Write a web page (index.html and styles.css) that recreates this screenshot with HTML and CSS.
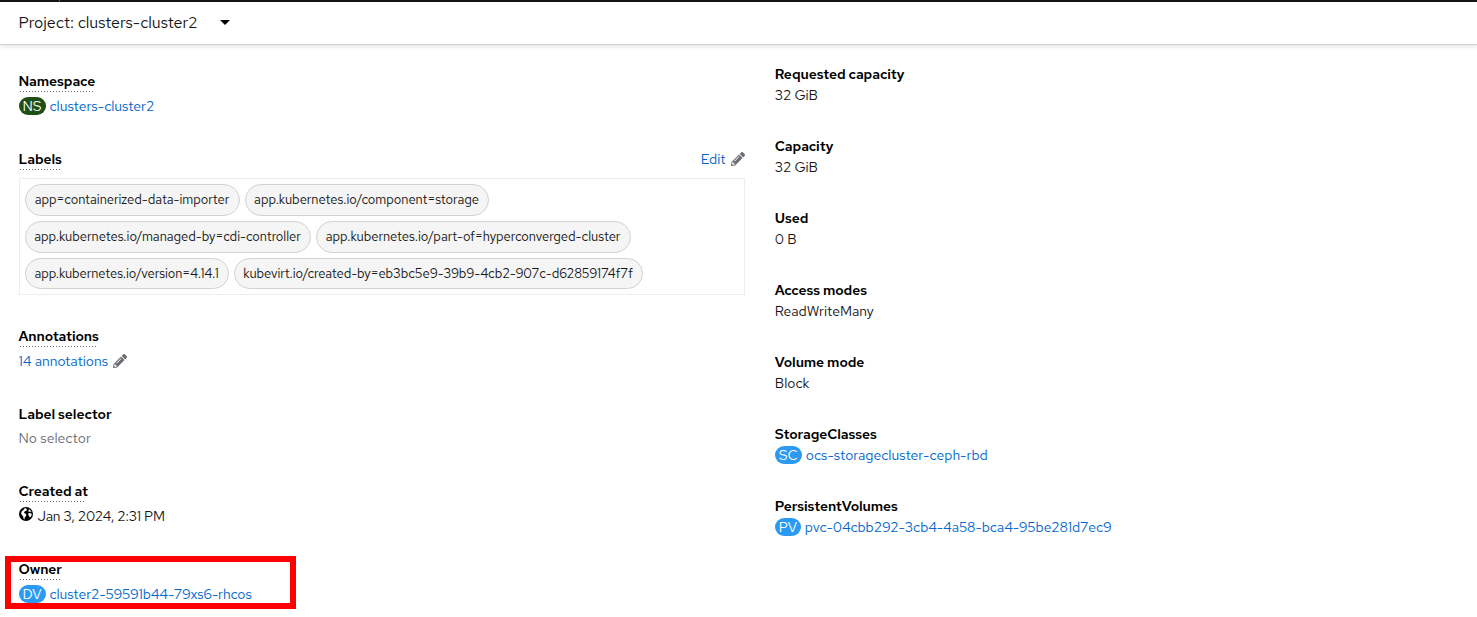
FILE: index.html
```html
<!DOCTYPE html>
<html lang="en">
<head>
<meta charset="utf-8">
<title>PersistentVolumeClaim details</title>
<link rel="stylesheet" href="styles.css">
</head>
<body>
<svg class="sprite" aria-hidden="true">
  <symbol id="pencil" viewBox="0 0 512 512"><path d="M497.900 142.100l-46.100 46.100c-4.700 4.700-12.300 4.700-17 0l-111-111c-4.700-4.700-4.700-12.300 0-17l46.100-46.100c18.700-18.700 49.100-18.700 67.900 0l60.100 60.100c18.800 18.700 18.800 49.100 0 68zM284.200 99.800L21.600 362.400.4 483.900c-2.900 16.400 11.400 30.600 27.800 27.800l121.500-21.300 262.600-262.600c4.700-4.700 4.700-12.300 0-17l-111-111c-4.800-4.700-12.400-4.700-17.100 0zM124.100 339.900c-5.500-5.500-5.500-14.300 0-19.800l154-154c5.500-5.500 14.300-5.500 19.800 0s5.500 14.300 0 19.800l-154 154c-5.500 5.500-14.300 5.500-19.800 0zM88 424h48v36.300l-64.500 11.300-31.100-31.100L51.700 376H88v48z"/></symbol>
</svg>
<header class="masthead"><span class="masthead-divider"></span></header>
<nav class="project-bar">
  <span class="project-name">Project: clusters-cluster2</span>
  <span class="caret"></span>
</nav>
<main class="details">
  <section class="column column-left">
    <div class="item">
      <h3 class="term help">Namespace</h3>
      <div class="value"><span class="badge namespace">NS</span><a class="link short">clusters-cluster2</a></div>
    </div>
    <div class="item item-labels">
      <div class="item-head">
        <h3 class="term help">Labels</h3>
        <a class="link edit short">Edit<svg class="pencil"><use href="#pencil"/></svg></a>
      </div>
      <div class="label-box">
        <div class="label-row"><span class="label chip-importer">app=containerized-data-importer</span><span class="label chip-component">app.kubernetes.io/component=storage</span></div>
        <div class="label-row"><span class="label chip-managed">app.kubernetes.io/managed-by=cdi-controller</span><span class="label chip-part">app.kubernetes.io/part-of=hyperconverged-cluster</span></div>
        <div class="label-row"><span class="label chip-version">app.kubernetes.io/version=4.14.1</span><span class="label chip-created">kubevirt.io/created-by=eb3bc5e9-39b9-4cb2-907c-d62859174f7f</span></div>
      </div>
    </div>
    <div class="item">
      <h3 class="term help">Annotations</h3>
      <div class="value"><a class="link short">14 annotations<svg class="pencil"><use href="#pencil"/></svg></a></div>
    </div>
    <div class="item">
      <h3 class="term">Label selector</h3>
      <div class="value muted">No selector</div>
    </div>
    <div class="item">
      <h3 class="term help">Created at</h3>
      <div class="value"><svg class="globe" viewBox="0 0 14 14"><circle cx="7" cy="7" r="7"/><path d="M5.600 1.300 7.600 1.200 7 2.100 8.100 2.700 7.200 3.700 5.900 4.300 5.100 5.300 5.300 6.200 6.800 6.800 7.300 8 6.600 9.500 5.800 10.600 5.400 12.500 4.500 11.400 4.100 9.200 2.900 7.900 2.100 6.200 2.700 4.600 4 3.300 5 2.500ZM9.800 2.100 11.600 3.500 12.500 5 11 4.600 9.900 5 9.300 4 9.900 3.200ZM9.400 6.300 10.900 6 12.700 6.700 12.500 8.500 11.400 10.200 10.500 10.300 10.200 8.900 9.200 8.100Z"/></svg><span class="timestamp">Jan 3, 2024, 2:31 PM</span></div>
    </div>
    <div class="item">
      <h3 class="term help">Owner</h3>
      <div class="value"><span class="badge">DV</span><a class="link">cluster2-59591b44-79xs6-rhcos</a></div>
      <div class="highlight"></div>
    </div>
  </section>
  <section class="column column-right">
    <div class="item"><h3 class="term">Requested capacity</h3><div class="value amount">32 GiB</div></div>
    <div class="item"><h3 class="term">Capacity</h3><div class="value amount">32 GiB</div></div>
    <div class="item"><h3 class="term">Used</h3><div class="value">0 B</div></div>
    <div class="item"><h3 class="term">Access modes</h3><div class="value">ReadWriteMany</div></div>
    <div class="item"><h3 class="term">Volume mode</h3><div class="value">Block</div></div>
    <div class="item"><h3 class="term">StorageClasses</h3><div class="value"><span class="badge">SC</span><a class="link storage-class">ocs-storagecluster-ceph-rbd</a></div></div>
    <div class="item"><h3 class="term">PersistentVolumes</h3><div class="value"><span class="badge badge-pv">PV</span><a class="link">pvc-04cbb292-3cb4-4a58-bca4-95be281d7ec9</a></div></div>
  </section>
</main>
</body>
</html>
```
FILE: styles.css
```css
* { box-sizing: border-box; }
body {
  margin: 0;
  height: 617px;
  overflow: hidden;
  background: #fff;
  color: #151515;
  font: 14px/21px "Red Hat Text", RedHatText, Lato, "Open Sans", sans-serif;
}
.sprite { display: none; }
.masthead { height: 2px; background: #151515; display: flex; padding-left: 59px; }
.masthead-divider { width: 1px; background: #4f5255; }
.project-bar {
  height: 43px;
  padding: 0 18.5px 2px;
  display: flex;
  align-items: center;
  gap: 23.5px;
  border-bottom: 1px solid #d2d2d2;
  box-shadow: 0 2px 4px rgba(3, 3, 3, 0.1);
  font-size: 16px;
}
.project-name { letter-spacing: -0.02px; width: 178px; white-space: nowrap; }
.caret { border: 5px solid transparent; border-top-color: #000; border-bottom: 0; }
.details { display: flex; gap: 30.3px; padding-left: 18.5px; }
.column { display: flex; flex-direction: column; }
.column-left { width: 726px; padding-top: 26px; gap: 32px; }
.column-right { width: 672px; padding-top: 19px; gap: 30px; }
.item { position: relative; }
.item-labels { margin-bottom: -1px; }
.item-head { display: flex; justify-content: space-between; }
.term {
  margin: 0;
  width: fit-content;
  color: #000;
  font-size: 14px;
  line-height: 21px;
  font-weight: 600;
  letter-spacing: -0.1px;
}
.term.help {
  height: 21px;
  line-height: 20px;
  background: repeating-linear-gradient(90deg, #6a6e73 0 1px, transparent 1px 3px) 1.5px 20px / calc(100% - 3px) 1px no-repeat;
}
.value { display: flex; align-items: center; height: 21px; white-space: nowrap; }
.column-left .value { margin-top: 3px; }
.column-left .help + .value { margin-top: 4px; }
.muted { color: #6a6e73; }
.link { color: #06c; letter-spacing: -0.08px; display: flex; align-items: center; }
.link.short { letter-spacing: -0.02px; }
.storage-class { letter-spacing: 0; }
.timestamp { letter-spacing: -0.2px; }
.amount { letter-spacing: -0.1px; }
.badge {
  width: 27px;
  height: 18px;
  margin: -1px 4px 0 0;
  border-radius: 9px;
  background: #2b9af3;
  color: #fff;
  line-height: 18px;
  text-align: center;
}
.badge-pv { width: 26px; }
.namespace { background: #1e4f18; }
.pencil { width: 14px; height: 14px; margin: -2px 0 0 5px; fill: #6a6e73; }
.edit { line-height: 21px; height: 21px; }
.globe { width: 14px; height: 14px; margin: -5px 5px 0 0; fill: #000; }
.globe path { fill: #fff; }
.label-box {
  height: 117px;
  margin-top: 8px;
  padding: 5px;
  border: 1px solid #ededed;
  display: flex;
  flex-direction: column;
  gap: 5px;
}
.label-row { display: flex; gap: 5px; }
.label {
  height: 32px;
  border: 1px solid #d2d2d2;
  border-radius: 16px;
  background: #f5f5f5;
  font-size: 13px;
  line-height: 29px;
  letter-spacing: -0.04px;
  text-align: center;
  white-space: nowrap;
}
.label-row:last-child .label { height: 31px; }
.chip-importer { width: 215px; }
.chip-component { width: 244px; }
.chip-managed { width: 286px; }
.chip-part { width: 315px; }
.chip-version { width: 204px; letter-spacing: -0.09px; }
.chip-created { width: 409px; letter-spacing: -0.08px; }
.highlight {
  position: absolute;
  left: -13.5px;
  top: -3px;
  width: 291px;
  height: 53px;
  border: 6px solid #f00;
}
```
